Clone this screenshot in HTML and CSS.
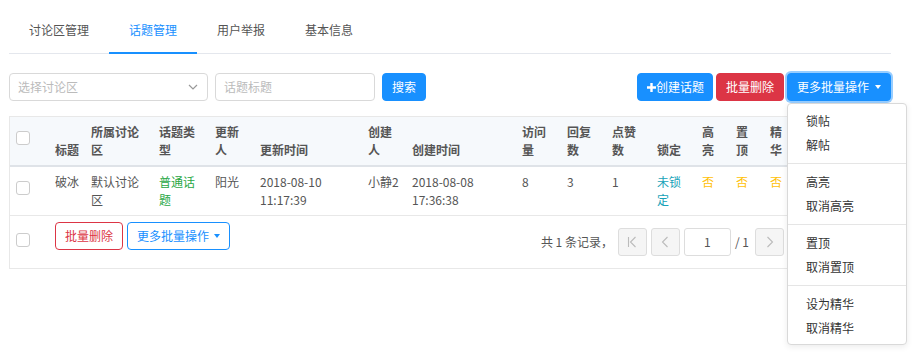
FILE: index.html
```html
<!DOCTYPE html>
<html lang="zh-CN">
<head>
    <meta charset="UTF-8">
    <title>话题管理</title>
    <link rel="stylesheet" href="styles.css">
</head>
<body>
    <div class="page">
        <ul class="tabs">
            <li class="tab">讨论区管理</li>
            <li class="tab active">话题管理</li>
            <li class="tab">用户举报</li>
            <li class="tab">基本信息</li>
        </ul>

        <div class="toolbar">
            <div class="filters">
                <div class="select">
                    <span>选择讨论区</span>
                    <svg width="10" height="6" viewBox="0 0 10 6"><path d="M1 1l4 4 4-4" fill="none" stroke="#999" stroke-width="1.2"/></svg>
                </div>
                <div class="input">话题标题</div>
                <button class="btn btn-primary">搜索</button>
            </div>
            <div class="actions">
                <button class="btn btn-primary btn-create"><svg width="9" height="9" viewBox="0 0 9 9"><path d="M4.5 0v9M0 4.5h9" stroke="#fff" stroke-width="2.4"/></svg>创建话题</button>
                <button class="btn btn-danger">批量删除</button>
                <div class="dropdown">
                    <button class="btn btn-primary focused">更多批量操作<span class="caret"></span></button>
                    <ul class="menu">
                        <li>锁帖</li>
                        <li>解帖</li>
                        <li class="divider"></li>
                        <li>高亮</li>
                        <li>取消高亮</li>
                        <li class="divider"></li>
                        <li>置顶</li>
                        <li>取消置顶</li>
                        <li class="divider"></li>
                        <li>设为精华</li>
                        <li>取消精华</li>
                    </ul>
                </div>
            </div>
        </div>

        <table class="grid">
            <colgroup>
                <col style="width:39px">
                <col style="width:36px">
                <col style="width:68px">
                <col style="width:56px">
                <col style="width:45px">
                <col style="width:108px">
                <col style="width:44px">
                <col style="width:110px">
                <col style="width:45px">
                <col style="width:45px">
                <col style="width:45px">
                <col style="width:45px">
                <col style="width:34px">
                <col style="width:34px">
                <col style="width:34px">
                <col>
            </colgroup>
            <thead>
                <tr>
                    <th class="check-cell"><span class="checkbox"></span></th>
                    <th>标题</th>
                    <th>所属讨论区</th>
                    <th>话题类型</th>
                    <th>更新人</th>
                    <th>更新时间</th>
                    <th>创建人</th>
                    <th>创建时间</th>
                    <th>访问量</th>
                    <th>回复数</th>
                    <th>点赞数</th>
                    <th>锁定</th>
                    <th>高亮</th>
                    <th>置顶</th>
                    <th>精华</th>
                    <th></th>
                </tr>
            </thead>
            <tbody>
                <tr>
                    <td class="check-cell"><span class="checkbox"></span></td>
                    <td>破冰</td>
                    <td>默认讨论区</td>
                    <td class="text-success">普通话题</td>
                    <td>阳光</td>
                    <td>2018-08-10 11:17:39</td>
                    <td>小静2</td>
                    <td>2018-08-08 17:36:38</td>
                    <td>8</td>
                    <td>3</td>
                    <td>1</td>
                    <td class="text-info">未锁定</td>
                    <td class="text-warning">否</td>
                    <td class="text-warning">否</td>
                    <td class="text-warning">否</td>
                    <td></td>
                </tr>
            </tbody>
            <tfoot>
                <tr>
                    <td colspan="16">
                        <div class="footer">
                            <span class="checkbox footer-check"></span>
                            <button class="btn btn-outline-danger">批量删除</button>
                            <button class="btn btn-outline-primary">更多批量操作<span class="caret"></span></button>
                            <div class="pager">
                                <span class="total">共 1 条记录，</span>
                                <span class="page-btn">
                                    <svg width="10" height="12" viewBox="0 0 10 12"><path d="M1.5 1v10M8.5 1L3.5 6l5 5" fill="none" stroke="#bbb" stroke-width="1.1"/></svg>
                                </span>
                                <span class="page-btn">
                                    <svg width="8" height="12" viewBox="0 0 8 12"><path d="M6.5 1L1.5 6l5 5" fill="none" stroke="#bbb" stroke-width="1.1"/></svg>
                                </span>
                                <span class="page-input">1</span>
                                <span class="page-count">/ 1</span>
                                <span class="page-btn">
                                    <svg width="8" height="12" viewBox="0 0 8 12"><path d="M1.5 1l5 5-5 5" fill="none" stroke="#bbb" stroke-width="1.1"/></svg>
                                </span>
                                <span class="page-btn">
                                    <svg width="10" height="12" viewBox="0 0 10 12"><path d="M8.5 1v10M1.5 1l5 5-5 5" fill="none" stroke="#bbb" stroke-width="1.1"/></svg>
                                </span>
                                <span class="page-size"></span>
                            </div>
                        </div>
                    </td>
                </tr>
            </tfoot>
        </table>
    </div>
</body>
</html>
```

FILE: styles.css
```css
html,
body {
    min-height: 354px;
}

body {
    margin: 0;
    background-color: #fff;
    font-family: "Noto Sans CJK SC", "Noto Sans", sans-serif;
    font-size: 12px;
    color: #555;
}

.page {
    width: 882px;
    margin-left: 9px;
}

/* tabs */
.tabs {
    display: flex;
    margin: 0;
    padding: 0;
    list-style: none;
    border-bottom: 1px solid #e4e7ed;
}

.tab {
    padding: 21px 20px 13px;
    line-height: 18px;
    font-size: 12px;
    color: #555;
    border-bottom: 2px solid transparent;
    margin-bottom: -1px;
}

.tab.active {
    color: #1890ff;
    border-bottom-color: #1890ff;
}

/* toolbar */
.toolbar {
    display: flex;
    justify-content: space-between;
    margin-top: 19px;
}

.filters {
    display: flex;
    gap: 7px;
}

.select,
.input {
    box-sizing: border-box;
    height: 28px;
    padding: 0 8px;
    border: 1px solid #d9d9d9;
    border-radius: 4px;
    color: #bbb;
    line-height: 26px;
}

.select {
    width: 199px;
    display: flex;
    justify-content: space-between;
    align-items: center;
    padding-right: 9px;
}

.input {
    width: 160px;
}

.actions {
    display: flex;
    gap: 3px;
}

.btn {
    box-sizing: border-box;
    height: 28px;
    padding: 0 9px;
    border: 1px solid transparent;
    border-radius: 4px;
    font-family: inherit;
    font-size: 12px;
    line-height: 26px;
    display: inline-flex;
    align-items: center;
    cursor: pointer;
}

.btn-create {
    padding-left: 9px;
    padding-right: 8px;
}

.btn-primary {
    background-color: #1890ff;
    border-color: #1890ff;
    color: #fff;
}

.btn-danger {
    background-color: #dc3545;
    border-color: #dc3545;
    color: #fff;
}

.btn-outline-danger {
    background-color: #fff;
    border-color: #dc3545;
    color: #dc3545;
}

.btn-outline-primary {
    background-color: #fff;
    border-color: #1890ff;
    color: #1890ff;
}

.focused {
    box-shadow: 0 0 0 2px rgba(24, 144, 255, 0.45);
}

.caret {
    display: inline-block;
    width: 0;
    height: 0;
    margin-left: 6px;
    border-top: 4px solid currentColor;
    border-left: 3.5px solid transparent;
    border-right: 3.5px solid transparent;
}

.footer .caret {
    margin-left: 5px;
}

.dropdown {
    position: relative;
}

.menu {
    position: absolute;
    top: 30px;
    left: 0;
    z-index: 10;
    width: 120px;
    box-sizing: border-box;
    margin: 0;
    padding: 5px 0;
    list-style: none;
    background-color: #fff;
    border: 1px solid #d9d9d9;
    border-radius: 4px;
    box-shadow: 0 2px 6px rgba(0, 0, 0, 0.08);
}

.menu li {
    height: 23.5px;
    line-height: 23.5px;
    padding: 0 18px;
    color: #333;
}

.menu li.divider {
    height: 1px;
    padding: 0;
    margin: 6.5px 0;
    background-color: #e5e5e5;
}

/* table */
.grid {
    width: 882px;
    margin-top: 15px;
    table-layout: fixed;
    border-collapse: separate;
    border-spacing: 0;
    border: 1px solid #e8e8e8;
}

.grid th,
.grid td {
    padding: 6px;
    line-height: 18px;
    text-align: left;
    overflow: hidden;
}

.grid thead th {
    background-color: #f6f9fc;
    border-bottom: 2px solid #dfe3e8;
    vertical-align: bottom;
    font-weight: bold;
    color: #555;
}

.grid tbody td {
    vertical-align: top;
    border-bottom: 1px solid #e8e8e8;
}

.grid th.check-cell,
.grid td.check-cell {
    vertical-align: top;
}

.checkbox {
    display: block;
    box-sizing: border-box;
    width: 14px;
    height: 14px;
    margin-top: 8px;
    border: 1px solid #ccc;
    border-radius: 3px;
    background-color: #fff;
}

.text-success {
    color: #28a745;
}

.text-info {
    color: #17a2b8;
}

.text-warning {
    color: #ffc107;
}

.footer {
    display: flex;
    height: 40px;
}

.footer .btn {
    margin-right: 4px;
}

.footer-check {
    margin-top: 11px;
    margin-right: 25px;
}

.pager {
    margin-left: auto;
    align-self: center;
    display: flex;
    align-items: center;
    gap: 4px;
}

.total {
    margin-right: 1px;
    color: #555;
}

.page-btn {
    box-sizing: border-box;
    width: 29px;
    height: 28px;
    display: flex;
    align-items: center;
    justify-content: center;
    background-color: #f5f5f5;
    border: 1px solid #ddd;
    border-radius: 3px;
}

.page-input {
    box-sizing: border-box;
    width: 47px;
    height: 28px;
    line-height: 26px;
    text-align: center;
    border: 1px solid #ddd;
    border-radius: 3px;
    color: #555;
}

.page-count {
    margin-right: 2px;
}

.page-size {
    box-sizing: border-box;
    width: 63px;
    height: 28px;
    border: 1px solid #ddd;
    border-radius: 3px;
}
```
